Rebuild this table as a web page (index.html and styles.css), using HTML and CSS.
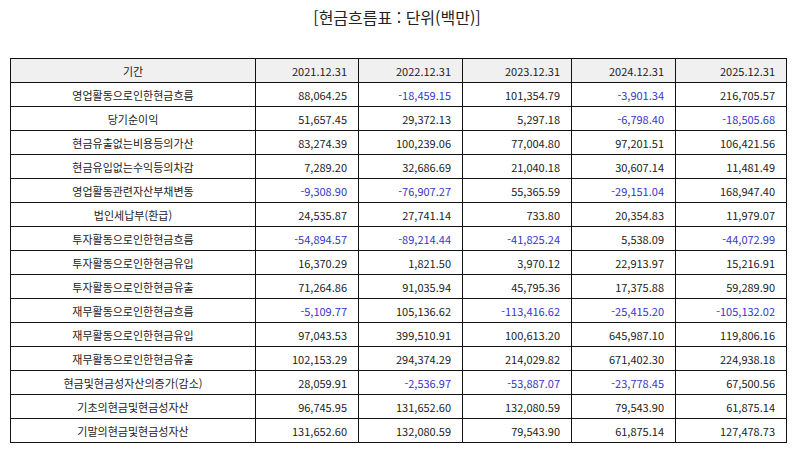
FILE: index.html
```html
<!DOCTYPE html>
<html lang="ko">
<head>
<meta charset="utf-8">
<link rel="stylesheet" href="styles.css">
</head>
<body>
<div class="page">
  <h1 class="title">[현금흐름표 : 단위(백만)]</h1>
  <table class="cf">
    <colgroup>
      <col class="c-label"><col class="c-a"><col class="c-b"><col class="c-c"><col class="c-d"><col class="c-e">
    </colgroup>
    <thead>
      <tr><th>기간</th><th>2021.12.31</th><th>2022.12.31</th><th>2023.12.31</th><th>2024.12.31</th><th>2025.12.31</th></tr>
    </thead>
    <tbody>
      <tr><td>영업활동으로인한현금흐름</td><td>88,064.25</td><td class="neg">-18,459.15</td><td>101,354.79</td><td class="neg">-3,901.34</td><td>216,705.57</td></tr>
      <tr><td>당기순이익</td><td>51,657.45</td><td>29,372.13</td><td>5,297.18</td><td class="neg">-6,798.40</td><td class="neg">-18,505.68</td></tr>
      <tr><td>현금유출없는비용등의가산</td><td>83,274.39</td><td>100,239.06</td><td>77,004.80</td><td>97,201.51</td><td>106,421.56</td></tr>
      <tr><td>현금유입없는수익등의차감</td><td>7,289.20</td><td>32,686.69</td><td>21,040.18</td><td>30,607.14</td><td>11,481.49</td></tr>
      <tr><td>영업활동관련자산부채변동</td><td class="neg">-9,308.90</td><td class="neg">-76,907.27</td><td>55,365.59</td><td class="neg">-29,151.04</td><td>168,947.40</td></tr>
      <tr><td>법인세납부(환급)</td><td>24,535.87</td><td>27,741.14</td><td>733.80</td><td>20,354.83</td><td>11,979.07</td></tr>
      <tr><td>투자활동으로인한현금흐름</td><td class="neg">-54,894.57</td><td class="neg">-89,214.44</td><td class="neg">-41,825.24</td><td>5,538.09</td><td class="neg">-44,072.99</td></tr>
      <tr><td>투자활동으로인한현금유입</td><td>16,370.29</td><td>1,821.50</td><td>3,970.12</td><td>22,913.97</td><td>15,216.91</td></tr>
      <tr><td>투자활동으로인한현금유출</td><td>71,264.86</td><td>91,035.94</td><td>45,795.36</td><td>17,375.88</td><td>59,289.90</td></tr>
      <tr><td>재무활동으로인한현금흐름</td><td class="neg">-5,109.77</td><td>105,136.62</td><td class="neg">-113,416.62</td><td class="neg">-25,415.20</td><td class="neg">-105,132.02</td></tr>
      <tr><td>재무활동으로인한현금유입</td><td>97,043.53</td><td>399,510.91</td><td>100,613.20</td><td>645,987.10</td><td>119,806.16</td></tr>
      <tr><td>재무활동으로인한현금유출</td><td>102,153.29</td><td>294,374.29</td><td>214,029.82</td><td>671,402.30</td><td>224,938.18</td></tr>
      <tr><td>현금및현금성자산의증가(감소)</td><td>28,059.91</td><td class="neg">-2,536.97</td><td class="neg">-53,887.07</td><td class="neg">-23,778.45</td><td>67,500.56</td></tr>
      <tr><td>기초의현금및현금성자산</td><td>96,745.95</td><td>131,652.60</td><td>132,080.59</td><td>79,543.90</td><td>61,875.14</td></tr>
      <tr><td>기말의현금및현금성자산</td><td>131,652.60</td><td>132,080.59</td><td>79,543.90</td><td>61,875.14</td><td>127,478.73</td></tr>
    </tbody>
  </table>
</div>
</body>
</html>
```
FILE: styles.css
```css
html, body {
  margin: 0;
  padding: 0;
  background: #ffffff;
}
.page {
  width: 794px;
  padding: 6px 0 0 0;
  font-family: "Noto Sans CJK KR", "Noto Sans", sans-serif;
  color: #222222;
}
.title {
  margin: 0;
  font-size: 16px;
  line-height: 22px;
  font-weight: normal;
  text-align: center;
  color: #222222;
}
.cf {
  margin: 30px 0 0 10px;
  border-collapse: collapse;
  table-layout: fixed;
  width: 776px;
  font-size: 11px;
}
.c-label { width: 245px; }
.c-a { width: 103px; }
.c-b { width: 104px; }
.c-c { width: 109px; }
.c-d { width: 104px; }
.c-e { width: 111px; }
.cf th, .cf td {
  border: 1px solid #111111;
  height: 23px;
  padding: 0 11px 0 4px;
  line-height: 14px;
  text-align: right;
  font-weight: normal;
  white-space: nowrap;
}
.cf th {
  background: #f0f0f0;
}
.cf th:first-child, .cf td:first-child {
  text-align: center;
  padding: 0 4px;
}
.cf .neg {
  color: #3535c8;
}
```
